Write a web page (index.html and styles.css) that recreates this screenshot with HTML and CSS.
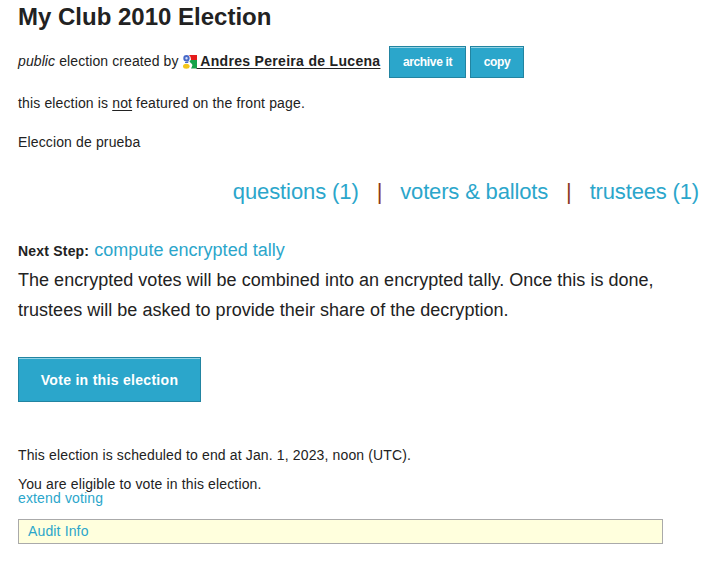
FILE: index.html
```html
<!DOCTYPE html>
<html lang="en">
<head>
<meta charset="utf-8">
<title>My Club 2010 Election</title>
<link rel="stylesheet" href="styles.css">
</head>
<body>
<main>
<h1>My Club 2010 Election</h1>
<div class="meta"><span class="creator"><em>public</em> election created by <a class="owner" href="#"><svg class="google" viewBox="0 0 14 14"><path fill="#e51b1b" d="M6 0h8v5H8z"/><path fill="#14a34a" d="M8 5h6v8.500H8L9.500 10 6 6z"/><circle cx="3.500" cy="3.200" r="2.200" fill="#d7e2fa" stroke="#4869c8" stroke-width="2"/><path fill="#4869c8" d="M2 7l4-1-1 2H2z"/><ellipse cx="3.300" cy="11.200" rx="3.300" ry="2.500" fill="#f3c51b"/><path fill="none" stroke="#fff" stroke-width=".8" d="M6 .6c2 1.500 2 4 0 5.400-1 1 2.500 2 2.500 4.200 0 1.600-.7 2.500-1.700 3.300"/></svg><span class="name"> Andres Pereira de Lucena</span></a></span><a class="button" href="#">archive it</a><a class="button copy" href="#">copy</a></div>
<p class="featured">this election is <u>not</u> featured on the front page.</p>
<p class="description">Eleccion de prueba</p>
<nav><a href="#">questions (1)</a><span>|</span><a href="#">voters &amp; ballots</a><span>|</span><a href="#">trustees (1)</a></nav>
<section class="next"><b>Next Step:</b> <a href="#">compute encrypted tally</a><br>The encrypted votes will be combined into an encrypted tally. Once this is done,<br>trustees will be asked to provide their share of the decryption.</section>
<a class="button vote" href="#">Vote in this election</a>
<p class="schedule">This election is scheduled to end at Jan. 1, 2023, noon (UTC).</p>
<p class="eligible">You are eligible to vote in this election.<br><a href="#">extend voting</a></p>
<div class="audit"><a href="#">Audit Info</a></div>
</main>
</body>
</html>
```
FILE: styles.css
```css
* { box-sizing: border-box; }
body { margin: 0; background: #fff; color: #222; font: 14px/14px "Liberation Sans", Arial, sans-serif; letter-spacing: .14px; overflow: hidden; }
main { padding: 1px 0 0 18px; white-space: nowrap; }
h1, p { margin: 0; }
h1 { font-size: 24px; line-height: 32px; letter-spacing: 0; }
a { color: #2ba6cb; text-decoration: none; }
u { text-underline-offset: 2px; }
.meta { display: flex; align-items: center; height: 32px; margin-top: 13px; }
.creator { width: 363px; padding-bottom: 2px; letter-spacing: .1px; }
.meta .owner { color: #222; font-weight: bold; letter-spacing: .31px; }
.name { text-decoration: underline; text-underline-offset: 2px; }
.google { width: 14px; height: 14px; vertical-align: -3px; }
.button { display: flex; justify-content: center; align-items: center; width: 77px; height: 32px; margin-left: 8px; border: 1px solid #2284a1; background: #2ba6cb; box-shadow: inset 0 1px 0 rgba(255,255,255,.5); color: #fff; font-size: 12px; font-weight: bold; letter-spacing: -.35px; }
.button.copy { width: 54px; margin-left: 4px; }
.featured { margin-top: 18px; }
.description { margin-top: 25px; }
nav { display: flex; width: 681px; margin-top: 29px; justify-content: flex-end; font-size: 22px; line-height: 28px; letter-spacing: -.16px; }
nav span { margin: 0 18px; color: #8b3a20; }
nav a:first-child { letter-spacing: -.1px; }
.next { margin-top: 29px; font-size: 18px; line-height: 30px; letter-spacing: .02px; }
.next b { font-size: 14px; line-height: 14px; letter-spacing: .2px; }
.button.vote { width: 183px; height: 45px; margin: 32px 0 0; font-size: 14px; letter-spacing: .3px; }
.schedule { margin-top: 46px; }
.eligible { margin-top: 15px; }
.audit { width: 645px; height: 25px; margin-top: 14px; padding: 4px 9px; border: 1px solid #aaa; background: #ffffdd; }
```
